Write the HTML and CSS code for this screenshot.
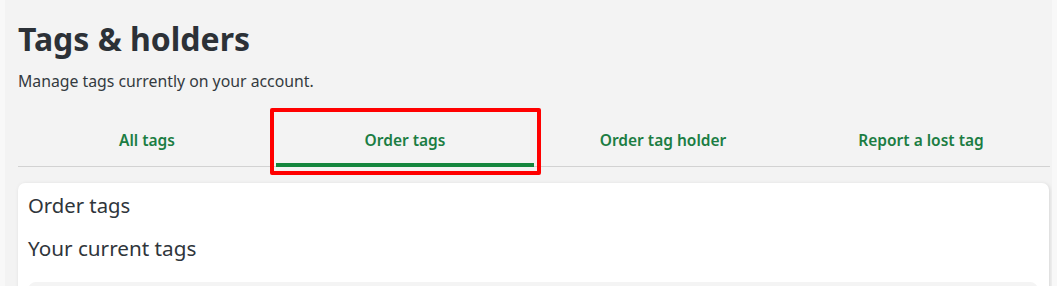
FILE: index.html
```html
<!DOCTYPE html>
<html lang="en">
<head>
<meta charset="utf-8">
<title>Tags &amp; holders</title>
<link rel="stylesheet" href="styles.css">
</head>
<body>
<main class="page">
  <h1 class="title">Tags &amp; holders</h1>
  <p class="subtitle">Manage tags currently on your account.</p>
  <nav class="tabs">
    <a class="tab" href="#">All tags</a>
    <a class="tab tab-active" href="#">Order tags<span class="highlight"></span></a>
    <a class="tab" href="#">Order tag holder</a>
    <a class="tab" href="#">Report a lost tag</a>
  </nav>
  <section class="card">
    <h2 class="card-title">Order tags</h2>
    <h3 class="card-subtitle">Your current tags</h3>
    <div class="tag-list"></div>
  </section>
</main>
</body>
</html>
```

FILE: styles.css
```css
html, body {
  margin: 0;
  padding: 0;
}
body {
  background: #f8f8f8;
  font-family: "Noto Sans", "Open Sans", sans-serif;
  color: #333a40;
  overflow: hidden;
  height: 286px;
}
.page {
  margin: 0 5px;
  padding: 0 2px 0 13px;
  background: #f3f3f3;
  height: 286px;
  overflow: hidden;
}
.title {
  margin: 0;
  padding-top: 21px;
  font-size: 32px;
  line-height: 36px;
  font-weight: 700;
  color: #2c3137;
}
.subtitle {
  margin: 14px 0 0;
  font-size: 15.8px;
  line-height: 20px;
  color: #333a40;
}
.tabs {
  display: grid;
  grid-template-columns: repeat(4, 1fr);
  margin-top: 21px;
  border-bottom: 1px solid #d2d2d2;
}
.tab {
  position: relative;
  display: block;
  padding: 16px 0 14px;
  text-align: center;
  font-size: 15.5px;
  line-height: 24px;
  font-weight: 600;
  color: #1b7d43;
  text-decoration: none;
}
.tab-active::after {
  content: "";
  position: absolute;
  left: 0;
  right: 0;
  bottom: -1px;
  height: 4px;
  background: #15863d;
}
.highlight {
  position: absolute;
  top: -4px;
  left: -6px;
  right: -7px;
  bottom: -9px;
  border: 4px solid #ff0000;
  border-radius: 2px;
}
.card {
  margin-top: 16px;
  margin-right: 1px;
  background: #ffffff;
  border-radius: 7px;
  box-shadow: 1px 1px 4px rgba(0, 0, 0, 0.12);
  padding: 8px 10px 0;
  height: 140px;
}
.card-title {
  margin: 0;
  font-size: 20.3px;
  line-height: 28px;
  font-weight: 400;
  color: #2f353b;
}
.card-subtitle {
  margin: 14px 0 0;
  font-size: 20.7px;
  line-height: 30px;
  font-weight: 400;
  color: #2f353b;
}
.tag-list {
  margin-top: 19px;
  margin-right: 1px;
  height: 60px;
  background: #f4f4f4;
  border-radius: 8px;
}
```
